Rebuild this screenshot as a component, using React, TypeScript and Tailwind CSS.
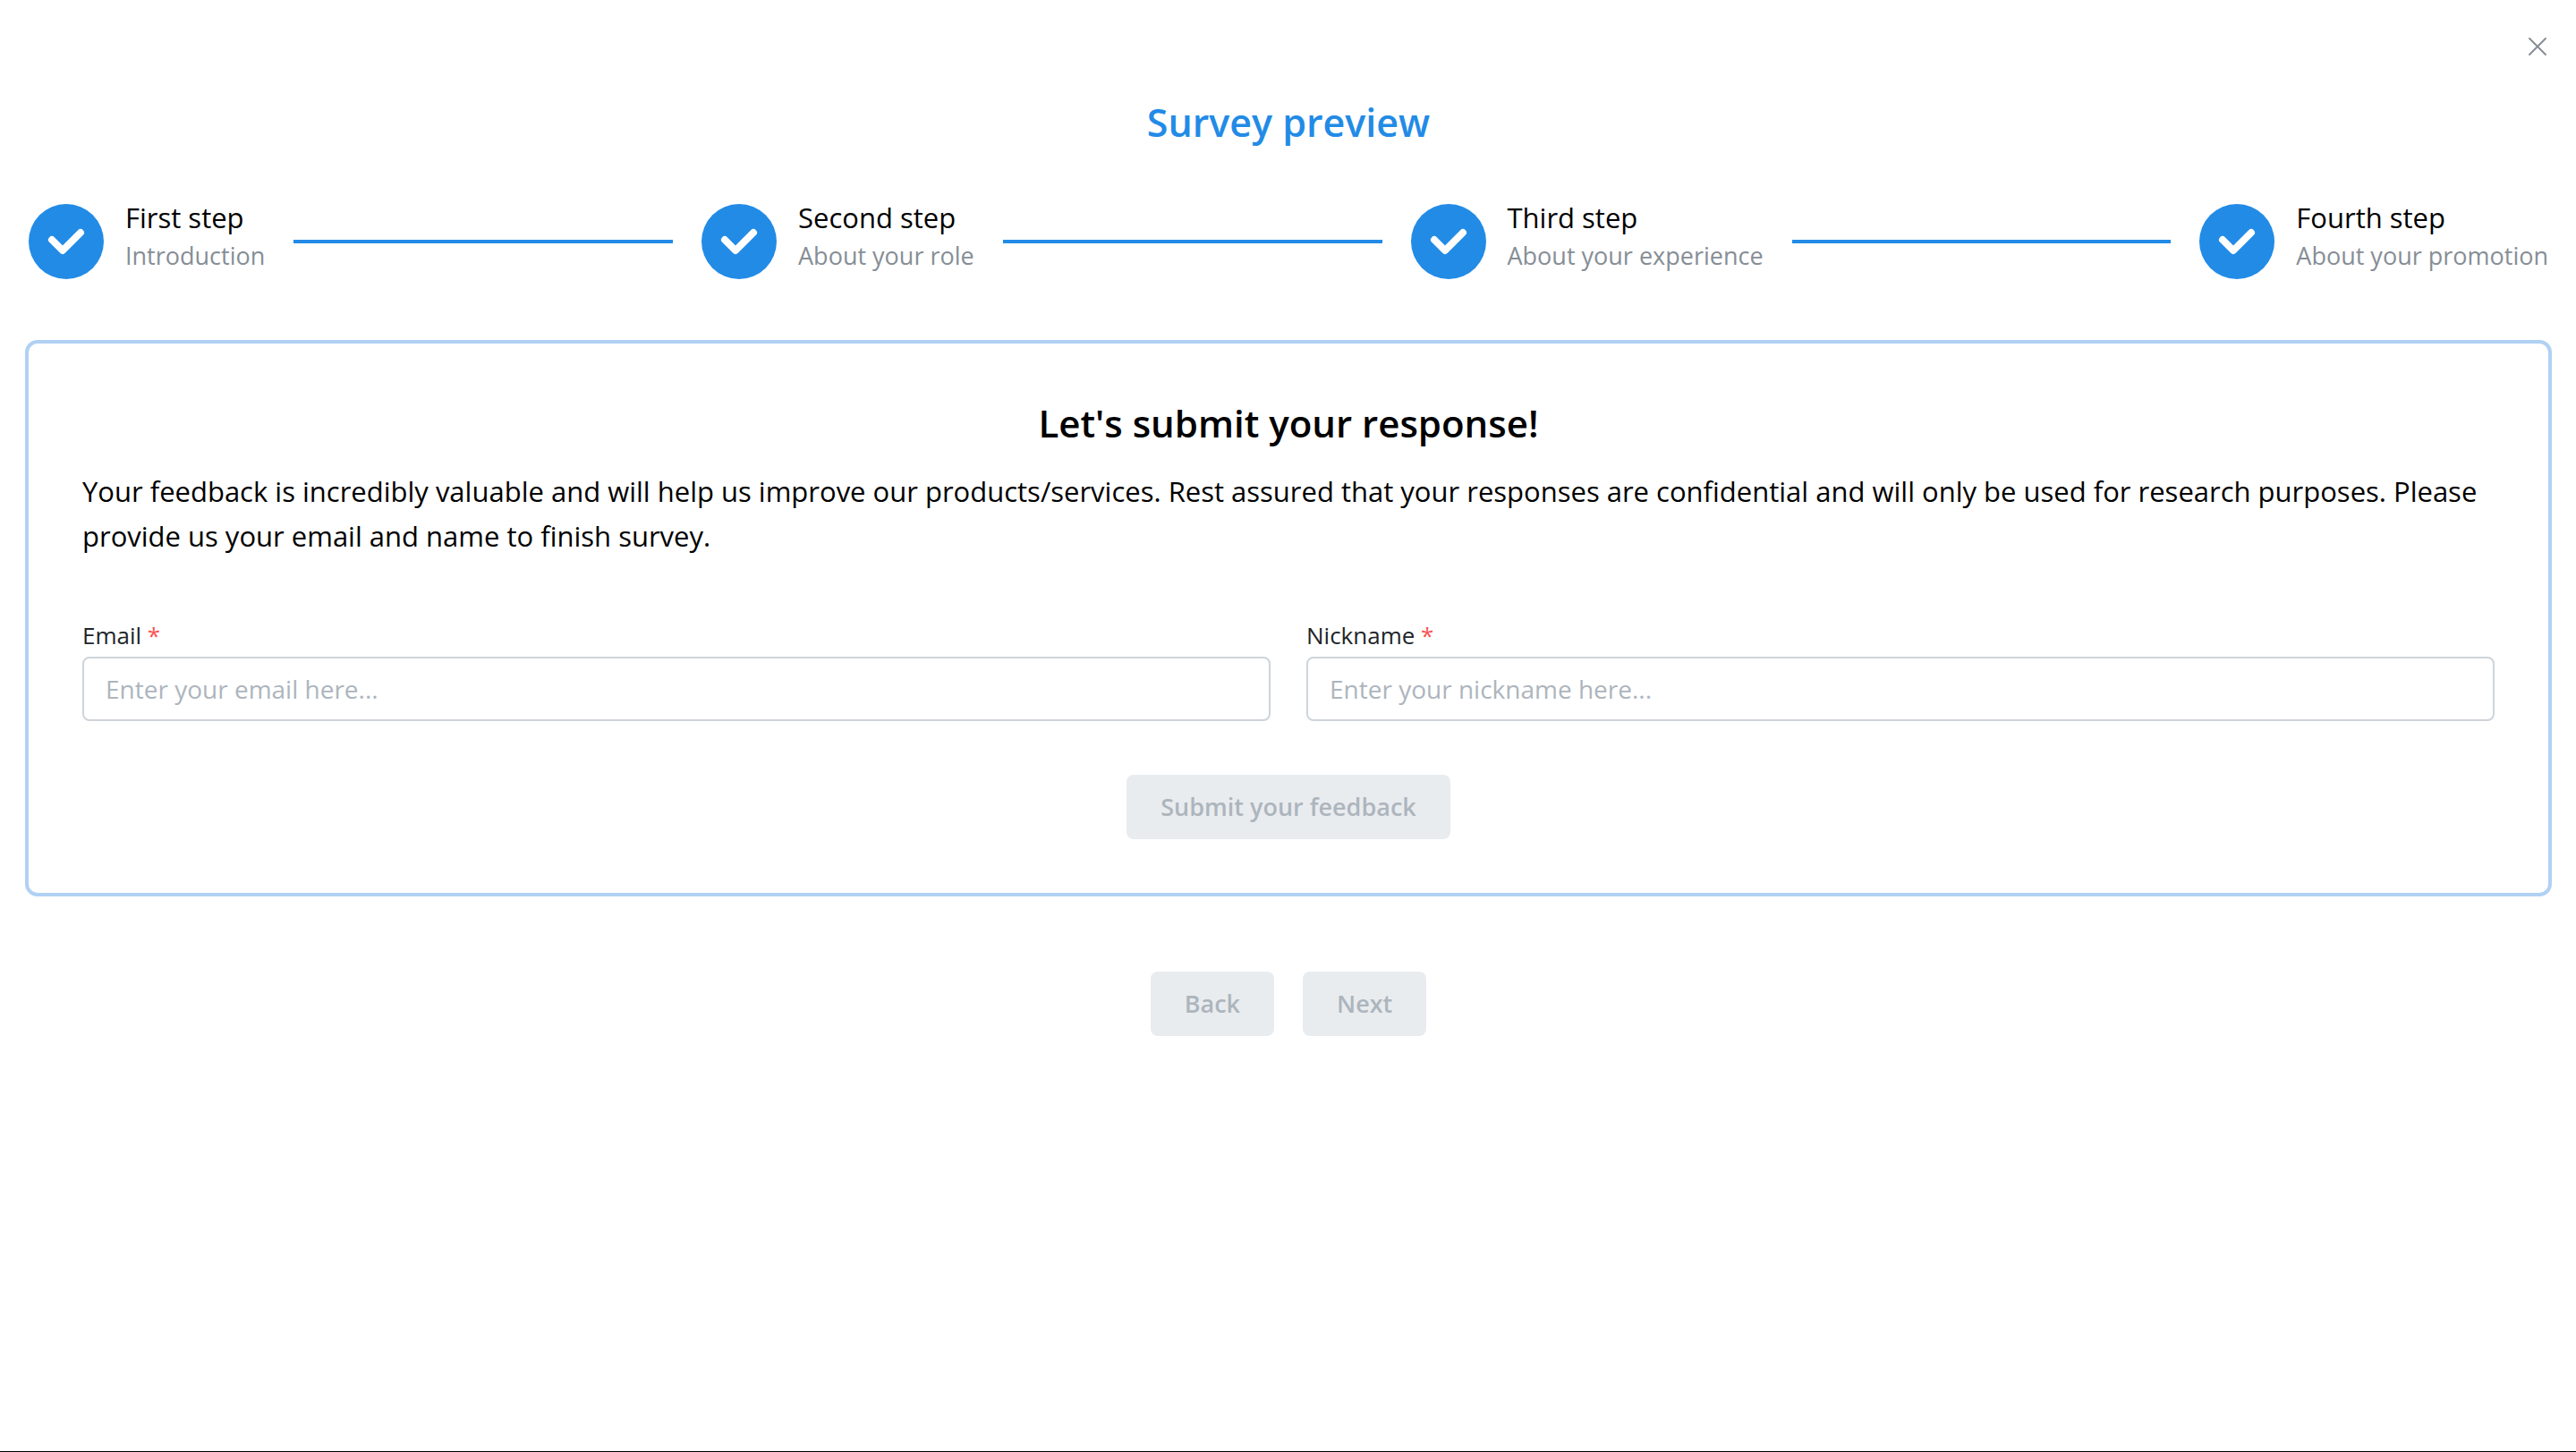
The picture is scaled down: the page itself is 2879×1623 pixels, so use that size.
import React, { Fragment, useState } from "react";

const steps = [
  { label: "First step", description: "Introduction" },
  { label: "Second step", description: "About your role" },
  { label: "Third step", description: "About your experience" },
  { label: "Fourth step", description: "About your promotion" },
];

function StepCheck() {
  return (
    <svg viewBox="0 0 84 84" className="size-[84px] shrink-0" aria-hidden="true">
      <circle cx="42" cy="42" r="42" fill="#228be6" />
      <path
        d="M26 40 L38 52 L58 32"
        fill="none"
        stroke="#fff"
        strokeWidth="8"
        strokeLinecap="round"
        strokeLinejoin="round"
      />
    </svg>
  );
}

function Stepper() {
  return (
    <div className="mt-[61px] flex items-center gap-8 px-1">
      {steps.map((step, i) => (
        <Fragment key={step.label}>
          {i > 0 && <div className="h-1 flex-1 bg-[#228be6]" />}
          <button type="button" className="flex shrink-0 items-center gap-6 text-left">
            <StepCheck />
            <span className="flex flex-col pb-2 whitespace-nowrap">
              <span className="text-[31px] leading-8 text-black">{step.label}</span>
              <span className="mt-2 text-[27px] leading-[38px] text-[#868e96]">{step.description}</span>
            </span>
          </button>
        </Fragment>
      ))}
    </div>
  );
}

type FieldProps = {
  id: string;
  label: string;
  type: string;
  placeholder: string;
};

function Field({ id, label, type, placeholder }: FieldProps) {
  const [value, setValue] = useState("");
  return (
    <div className="flex flex-col gap-1">
      <label htmlFor={id} className="text-[26px] leading-10 text-[#212529]">
        {label} <span className="text-[#fa5252]">*</span>
      </label>
      <input
        id={id}
        type={type}
        required
        value={value}
        onChange={(e) => setValue(e.target.value)}
        placeholder={placeholder}
        className="h-18 w-full rounded-lg border-2 border-[#ced4da] bg-white px-6 text-[28px] text-black outline-none placeholder:text-[#adb5bd] focus:border-[#228be6]"
      />
    </div>
  );
}

function DisabledButton({ children }: { children: React.ReactNode }) {
  return (
    <button
      type="button"
      disabled
      className="h-18 rounded-lg bg-[#e9ecef] px-[38px] text-[27px] font-semibold text-[#adb5bd]"
    >
      {children}
    </button>
  );
}

export default function App() {
  return (
    <main className="flex min-h-screen flex-col border-b border-black bg-white pt-9 pr-[27px] pl-7 font-['Open_Sans','Noto_Sans',sans-serif]">
      <button type="button" aria-label="Close" className="self-end">
        <svg viewBox="0 0 32 32" className="size-8" fill="none" stroke="#868e96" strokeWidth="2" strokeLinecap="round">
          <path d="M7 7 L25 25 M25 7 L7 25" />
        </svg>
      </button>

      <h1 className="mt-10 text-center text-[43px] leading-[58px] font-semibold text-[#228be6]">
        Survey preview
      </h1>

      <Stepper />

      <section className="mt-[67px] flex flex-col rounded-[14px] border-4 border-[#b1d1f4] p-[60px]">
        <h2 className="text-center text-[42px] leading-[58px] font-semibold text-black">
          Let's submit your response!
        </h2>
        <p className="mt-[22px] text-[31px] leading-[50px] text-black">
          Your feedback is incredibly valuable and will help us improve our products/services. Rest assured that your
          responses are confidential and will only be used for research purposes. Please provide us your email and name
          to finish survey.
        </p>
        <div className="mt-[66px] grid grid-cols-2 gap-10">
          <Field id="email" label="Email" type="email" placeholder="Enter your email here..." />
          <Field id="nickname" label="Nickname" type="text" placeholder="Enter your nickname here..." />
        </div>
        <div className="mt-[60px] flex justify-center">
          <DisabledButton>Submit your feedback</DisabledButton>
        </div>
      </section>

      <nav className="mt-21 flex justify-center gap-8">
        <DisabledButton>Back</DisabledButton>
        <DisabledButton>Next</DisabledButton>
      </nav>
    </main>
  );
}
